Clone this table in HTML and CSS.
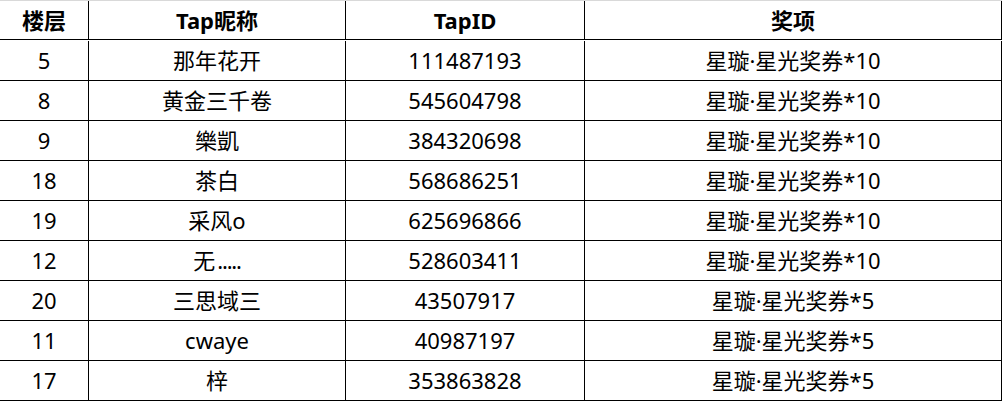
FILE: index.html
```html
<!DOCTYPE html>
<html lang="zh-CN">
<head>
<meta charset="utf-8">
<title>获奖名单</title>
<link rel="stylesheet" href="styles.css">
</head>
<body>
<div class="sheet">
  <div class="grid">
    <div class="cell head">楼层</div>
    <div class="cell head">Tap昵称</div>
    <div class="cell head">TapID</div>
    <div class="cell head">奖项</div>

    <div class="cell">5</div>
    <div class="cell">那年花开</div>
    <div class="cell">111487193</div>
    <div class="cell">星璇·星光奖券*10</div>

    <div class="cell">8</div>
    <div class="cell">黄金三千卷</div>
    <div class="cell">545604798</div>
    <div class="cell">星璇·星光奖券*10</div>

    <div class="cell">9</div>
    <div class="cell">樂凱</div>
    <div class="cell">384320698</div>
    <div class="cell">星璇·星光奖券*10</div>

    <div class="cell">18</div>
    <div class="cell">茶白</div>
    <div class="cell">568686251</div>
    <div class="cell">星璇·星光奖券*10</div>

    <div class="cell">19</div>
    <div class="cell">采风o</div>
    <div class="cell">625696866</div>
    <div class="cell">星璇·星光奖券*10</div>

    <div class="cell">12</div>
    <div class="cell">无<span class="dots">.....</span></div>
    <div class="cell">528603411</div>
    <div class="cell">星璇·星光奖券*10</div>

    <div class="cell">20</div>
    <div class="cell">三思域三</div>
    <div class="cell">43507917</div>
    <div class="cell">星璇·星光奖券*5</div>

    <div class="cell">11</div>
    <div class="cell">cwaye</div>
    <div class="cell">40987197</div>
    <div class="cell">星璇·星光奖券*5</div>

    <div class="cell">17</div>
    <div class="cell">梓</div>
    <div class="cell">353863828</div>
    <div class="cell">星璇·星光奖券*5</div>
  </div>
</div>
</body>
</html>
```

FILE: styles.css
```css
html, body {
  margin: 0;
  padding: 0;
  background: #ffffff;
}

.sheet {
  width: 1002px;
  height: 401px;
  overflow: hidden;
  border-top: 1px solid #d9d9d9;
  box-sizing: border-box;
}

.grid {
  display: grid;
  grid-template-columns: 89px 257px 239px 417px;
  grid-auto-rows: 40px;
  font-family: "Noto Sans", "Noto Sans CJK SC", sans-serif;
  font-size: 22px;
  color: #000000;
}

.cell {
  display: flex;
  align-items: center;
  justify-content: center;
  box-sizing: border-box;
  border-right: 1px solid #000000;
  border-bottom: 1px solid #000000;
  white-space: nowrap;
  line-height: 1;
  padding-bottom: 1px;
}

.head {
  font-weight: 700;
  height: 39px;
}

.dots {
  letter-spacing: -1.2px;
  margin-left: 2px;
}
```
